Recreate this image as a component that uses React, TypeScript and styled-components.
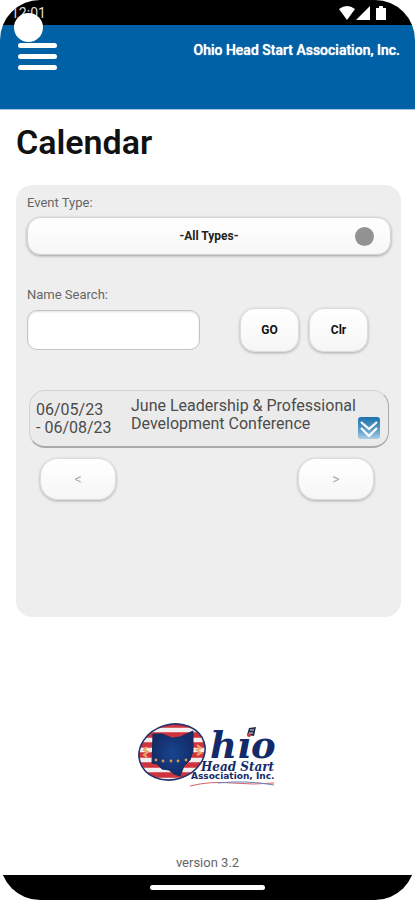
import React, { useState } from "react";
import styled, { createGlobalStyle } from "styled-components";

const GlobalStyle = createGlobalStyle`
  * { box-sizing: border-box; }
  body { margin: 0; background: #fff; font-family: Roboto, "Liberation Sans", sans-serif; color: #4c4c4c; }
  button, input, select { font-family: inherit; margin: 0; }
`;

const Phone = styled.div`
  position: relative;
  min-height: 100vh;
  display: flex;
  flex-direction: column;
  overflow: hidden;
  border-radius: 40px;
  background: #fff;
`;

const StatusBar = styled.div`
  height: 25px;
  flex: none;
  display: flex;
  align-items: center;
  justify-content: space-between;
  padding: 1px 28px 0 11px;
  background: #000;
  color: #ddd;
  font-size: 14px;
  line-height: 16px;
`;

const CameraHole = styled.span`
  position: absolute;
  left: 14px;
  top: 13px;
  width: 29px;
  height: 29px;
  border-radius: 50%;
  background: #fff;
`;

const Header = styled.header`
  height: 85px;
  flex: none;
  display: flex;
  align-items: flex-start;
  justify-content: space-between;
  padding: 16px 15px 0 18px;
  background: #0061a6;
  border-bottom: 1px solid #a9c5e2;
`;

const MenuButton = styled.button`
  display: flex;
  flex-direction: column;
  gap: 6px;
  padding: 2px 0;
  border: 0;
  background: none;
  cursor: pointer;
`;

const MenuLine = styled.span`
  width: 39px;
  height: 5px;
  border-radius: 3px;
  background: #fff;
`;

const Brand = styled.span`
  color: #fff;
  font-size: 14px;
  font-weight: 500;
  line-height: 19px;
  text-shadow: 0 0 1px #fff;
`;

const Title = styled.h1`
  margin: 12px 16px 23px;
  color: #111;
  font-size: 34px;
  font-weight: 600;
  line-height: 40px;
`;

const Panel = styled.main`
  flex: 1;
  display: flex;
  flex-direction: column;
  margin: 0 14px 0 16px;
  padding: 10px 10px 20px 11px;
  border-radius: 16px;
  background: #eee;
`;

const Label = styled.label`
  display: block;
  font-size: 13px;
  line-height: 16px;
  color: #666;
`;

const SelectWrap = styled.div`
  position: relative;
  margin: 6px 0 32px;
`;

const Select = styled.select`
  display: block;
  width: 100%;
  height: 38px;
  padding: 0 36px;
  appearance: none;
  border: 1px solid #d2d2d2;
  border-radius: 14px;
  background: linear-gradient(#fff, #f7f7f7);
  box-shadow: 0 1px 3px rgba(0, 0, 0, 0.35);
  color: #222;
  font-size: 12px;
  font-weight: 700;
  text-align: center;
  text-align-last: center;
`;

const Dot = styled.span`
  position: absolute;
  right: 17px;
  top: 10px;
  width: 19px;
  height: 19px;
  border-radius: 50%;
  background: #929292;
  pointer-events: none;
`;

const SearchRow = styled.form`
  display: flex;
  align-items: center;
  gap: 10px;
  margin: 5px 23px 0 0;
`;

const SearchBox = styled.div`
  flex: 1;
  padding-right: 30px;
`;

const SearchInput = styled.input`
  display: block;
  width: 100%;
  height: 40px;
  padding: 0 10px;
  border: 1px solid #c4c4c4;
  border-radius: 10px;
  background: #fff;
  box-shadow: inset 0 1px 2px rgba(0, 0, 0, 0.12);
  font-size: 14px;
`;

const PillButton = styled.button<{ $wide?: boolean }>`
  width: ${(p) => (p.$wide ? 76 : 59)}px;
  height: ${(p) => (p.$wide ? 42 : 44)}px;
  padding: 0;
  border: 1px solid #dcdcdc;
  border-radius: ${(p) => (p.$wide ? 18 : 15)}px;
  background: linear-gradient(#fff, #f6f6f6);
  box-shadow: 0 1px 3px rgba(0, 0, 0, 0.3);
  color: #111;
  font-size: 12px;
  font-weight: 700;
  cursor: pointer;
  &:disabled { color: #aaa; font-weight: 400; font-size: 14px; }
`;

const EventList = styled.ul`
  margin: 38px 2px 0;
  padding: 0;
  list-style: none;
`;

const EventItem = styled.li`
  display: grid;
  grid-template-columns: 95px 1fr 22px;
  min-height: 58px;
  padding: 6px 8px 7px 6px;
  border: 1px solid #d2d2d2;
  border-right-color: #aaa;
  border-bottom: 2px solid #aaa;
  border-radius: 16px;
  background: #ebebeb;
  font-size: 16px;
  line-height: 18px;
`;

const EventDate = styled.span`
  padding-top: 4px;
`;

const EventName = styled.span`
  white-space: nowrap;
`;

const ExpandButton = styled.button`
  align-self: end;
  display: block;
  width: 22px;
  height: 22px;
  padding: 0;
  border: 0;
  background: none;
  cursor: pointer;
  svg { display: block; }
`;

const Pager = styled.nav`
  display: flex;
  justify-content: space-between;
  margin: 10px 17px 0 13px;
`;

const Footer = styled.footer`
  flex: none;
  display: flex;
  flex-direction: column;
  align-items: center;
  gap: 67px;
  padding: 103px 0 4px;
  font-size: 13px;
  line-height: 16px;
  color: #666;
  svg { display: block; }
`;

const HomeBar = styled.div`
  height: 25px;
  flex: none;
  display: flex;
  align-items: center;
  justify-content: center;
  background: #000;
`;

const HomeIndicator = styled.span`
  width: 115px;
  height: 5px;
  border-radius: 3px;
  background: #fff;
`;

const StatusIcons = () => (
  <svg width="48" height="16" viewBox="0 0 48 16" fill="#fff" aria-hidden="true">
    <path d="M0 4Q8-2 16 4L8 15Z" />
    <path d="M31 1V15H17Z" />
    <path d="M37 3h3V1h4v2h3v12H37Z" />
  </svg>
);

const ExpandIcon = () => (
  <svg width="22" height="22" viewBox="0 0 22 22" aria-hidden="true">
    <defs>
      <linearGradient id="expandFill" x1="0" y1="0" x2="0" y2="1">
        <stop offset="0" stopColor="#1d72ad" />
        <stop offset="0.6" stopColor="#5d9dc7" />
        <stop offset="1" stopColor="#abcfe4" />
      </linearGradient>
    </defs>
    <rect width="22" height="22" rx="3" fill="url(#expandFill)" />
    <path d="M3 5l8 7 8-7M3 11l8 8 8-8" fill="none" stroke="#fff" strokeWidth="2.2" />
  </svg>
);

const Logo = () => (
  <svg width="144" height="68" viewBox="0 0 144 68" role="img" aria-label="Ohio Head Start Association, Inc.">
    <defs>
      <clipPath id="seal">
        <ellipse cx="36" cy="32" rx="34" ry="28" transform="rotate(-17 36 32)" />
      </clipPath>
      <radialGradient id="stateFill">
        <stop offset="0" stopColor="#174691" />
        <stop offset="1" stopColor="#142c68" />
      </radialGradient>
    </defs>
    <g clipPath="url(#seal)">
      <rect width="74" height="68" fill="#f4eeee" />
      <path d="M0 5h74M0 15h74M0 25h74M0 35h74M0 45h74M0 55h74" stroke="#cf343e" strokeWidth="5.5" />
    </g>
    <ellipse cx="36" cy="32" rx="33.5" ry="27.5" transform="rotate(-17 36 32)" fill="none" stroke="#26356e" strokeWidth="1.6" />
    <path d="M17 14h9l10 4 8-1 13-6v20l-3 9-6 6-4 10-6-2-5-4-7-1-5-5-5-1Z" fill="url(#stateFill)" stroke="#172b5d" strokeWidth="1" />
    <g fill="#d99a52">
      <circle cx="20" cy="40" r="1.4" /><circle cx="27" cy="41" r="1.4" />
      <circle cx="35" cy="41" r="1.4" /><circle cx="42" cy="41" r="1.4" />
      <circle cx="50" cy="40" r="1.4" />
    </g>
    <g fill="none" stroke="#eea565" strokeWidth="2">
      <path d="M11 27l-3 3 4 2-4 3 3 2M61 25l4 3-4 2 4 3-4 2" />
    </g>
    <text x="74" y="38" fill="#132b6a" fontFamily='"DejaVu Serif", serif' fontWeight="700" fontStyle="italic" fontSize="37">hıo</text>
    <path d="M113 8l7-1-2 9-7-1Z" fill="#20284c" />
    <circle cx="113" cy="15" r="2" fill="#c23b40" />
    <path d="M114 10h4M113 13h4" stroke="#ddd" strokeWidth="1" />
    <text x="65" y="51" fill="#132b6a" fontFamily='"DejaVu Serif", serif' fontWeight="700" fontStyle="italic" fontSize="12">Head Start</text>
    <text x="55" y="59" fill="#132b6a" fontFamily='"DejaVu Sans", sans-serif' fontWeight="700" fontSize="9">Association, Inc.</text>
    <path d="M54 66q20-5 42-3t42 0" fill="none" stroke="#d3656b" strokeWidth="1" />
    <path d="M82 63q28-3 56 2" fill="none" stroke="#6f84b5" strokeWidth="1" />
  </svg>
);

export default function App() {
  const [name, setName] = useState("");
  return (
    <>
      <GlobalStyle />
      <Phone>
        <StatusBar>
          <span>12:01</span>
          <StatusIcons />
        </StatusBar>
        <Header>
          <MenuButton type="button" aria-label="Menu">
            <MenuLine />
            <MenuLine />
            <MenuLine />
          </MenuButton>
          <Brand>Ohio Head Start Association, Inc.</Brand>
        </Header>
        <CameraHole />
        <Title>Calendar</Title>
        <Panel>
          <Label htmlFor="event-type">Event Type:</Label>
          <SelectWrap>
            <Select id="event-type">
              <option>-All Types-</option>
            </Select>
            <Dot />
          </SelectWrap>
          <Label htmlFor="name-search">Name Search:</Label>
          <SearchRow onSubmit={(e) => e.preventDefault()}>
            <SearchBox>
              <SearchInput id="name-search" type="text" value={name} onChange={(e) => setName(e.target.value)} />
            </SearchBox>
            <PillButton type="submit">GO</PillButton>
            <PillButton type="button" onClick={() => setName("")}>Clr</PillButton>
          </SearchRow>
          <EventList>
            <EventItem>
              <EventDate>06/05/23<br />- 06/08/23</EventDate>
              <EventName>June Leadership &amp; Professional<br />Development Conference</EventName>
              <ExpandButton type="button" aria-label="Show details">
                <ExpandIcon />
              </ExpandButton>
            </EventItem>
          </EventList>
          <Pager aria-label="Pages">
            <PillButton $wide type="button" disabled>&lt;</PillButton>
            <PillButton $wide type="button" disabled>&gt;</PillButton>
          </Pager>
        </Panel>
        <Footer>
          <Logo />
          <span>version 3.2</span>
        </Footer>
        <HomeBar>
          <HomeIndicator />
        </HomeBar>
      </Phone>
    </>
  );
}
